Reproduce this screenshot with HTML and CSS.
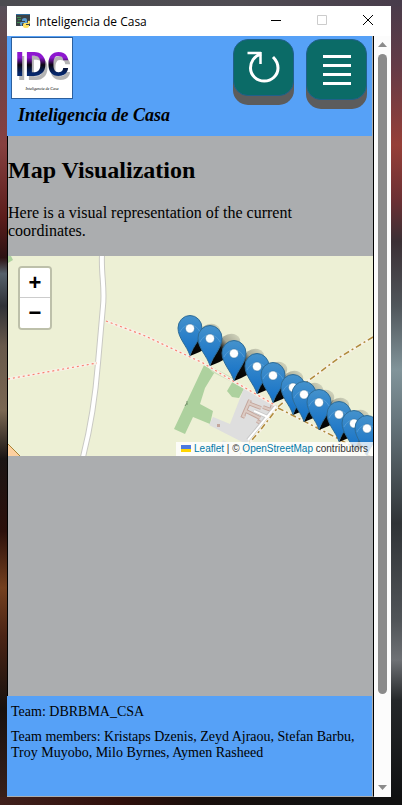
FILE: index.html
```html
<!DOCTYPE html>
<html lang="en">
<head>
    <meta charset="UTF-8">
    <meta name="viewport" content="width=device-width, initial-scale=1.0">
    <title>Inteligencia de Casa</title>
    <link rel="stylesheet" href="styles.css">
</head>
<body>
    <div class="window">
        <div class="titlebar">
            <svg class="app-icon" width="14" height="14" viewBox="0 0 14 14" aria-hidden="true">
                <rect width="14" height="12" fill="#3b4247"/>
                <path d="M0 .5h14" stroke="#2f6f9f"/>
                <path d="M1 3.500h4M2 5.500h3M1 8.500h3" stroke="#3d8b4f"/>
                <path d="M9 4q-3 0-3 2v1h3v1H5q-1 0-1 2 0 2 2 2v-2q0-1 1-1h4V6q0-2-2-2z" fill="#5c9fd4"/>
                <path d="M10 14q3 0 3-2v-1h-3v-1h3q1 0 1-2 0-2-2-1v1q0 1-1 1H8q-1 1-1 2v1q0 2 3 2z" fill="#ffe062"/>
            </svg>
            <span class="title">Inteligencia de Casa</span>
            <button class="win-btn" aria-label="Minimize"><svg width="12" height="12" viewBox="0 0 12 12"><path d="M1 5.500h10" stroke="#000"/></svg></button>
            <button class="win-btn" aria-label="Maximize" disabled><svg width="12" height="12" viewBox="0 0 12 12"><path d="M1.500 .5h9v9h-9z" fill="none" stroke="#ccc"/></svg></button>
            <button class="win-btn" aria-label="Close"><svg width="12" height="12" viewBox="0 0 12 12"><path d="M1 0l10 10M11 0L1 10" stroke="#000"/></svg></button>
        </div>

        <div class="view">
            <div class="page">
                <header>
                    <div class="brand">
                        <div class="logo">
                            <span class="logo-letters">IDC</span>
                            <span class="logo-name">Inteligencia de Casa</span>
                        </div>
                        <span class="brand-name">Inteligencia de Casa</span>
                    </div>
                    <div class="buttons">
                        <button class="btn" aria-label="Refresh">
                            <svg width="36" height="36" viewBox="0 0 36 36" fill="none" stroke="#fff">
                                <path d="M15 4C8 6 4.500 12 4.500 18A13.700 13 0 0 0 32 18C32 13 30 10 27 7" stroke-width="3"/>
                                <path d="M1.500 3H15M14.500 2v12" stroke-width="2.500"/>
                            </svg>
                        </button>
                        <button class="btn btn-menu" aria-label="Menu">
                            <svg width="30" height="32" viewBox="0 0 30 32" stroke="#fff" stroke-width="3">
                                <path d="M1 2.500h28M1 11.500h28M1 20.500h28M1 29.500h28"/>
                            </svg>
                        </button>
                    </div>
                </header>

                <main>
                    <h2>Map Visualization</h2>
                    <p>Here is a visual representation of the current coordinates.</p>

                    <div class="map">
                        <svg class="tiles" viewBox="0 0 365 200" preserveAspectRatio="xMinYMin slice" aria-hidden="true">
                            <defs>
                                <linearGradient id="pin-fill" x1="0" y1="0" x2="0" y2="1">
                                    <stop offset="0" stop-color="#4592cc"/>
                                    <stop offset="1" stop-color="#126fc6"/>
                                </linearGradient>
                                <linearGradient id="shade-fill" x1="0" y1="1" x2="1" y2="0">
                                    <stop offset="0" stop-color="#000"/>
                                    <stop offset=".45" stop-color="#000" stop-opacity=".95"/>
                                    <stop offset=".65" stop-color="#000" stop-opacity=".3"/>
                                    <stop offset="1" stop-color="#000" stop-opacity=".08"/>
                                </linearGradient>
                                <g id="pin">
                                    <path d="M0-.500C-3-10-12-18-12-28A12 12.500 0 0 1 12-28C12-18 3-10 0-.500Z" fill="url(#pin-fill)" stroke="#2e6c97"/>
                                    <path d="M-10-24A11 11.500 0 0 1 10-24" fill="none" stroke="#66a9da" stroke-opacity=".6"/>
                                    <circle cy="-27.500" r="4.500" fill="#fff" stroke="#2e6c97" stroke-opacity=".5"/>
                                </g>
                                <path id="shade" d="M0 0L8-22Q14-34 24-32Q34-28 28-19Q20-7 0 0Z" fill="url(#shade-fill)"/>
                            </defs>

                            <rect width="365" height="200" fill="#edf0d5"/>
                            <path d="M0 0h3l2 4-5 3z" fill="#add19e"/>
                            <path d="M0 188l12 12H0z" fill="#fdd0a0"/>
                            <path d="M0 188l12 12" stroke="#a88232"/>

                            <!-- woods -->
                            <g fill="#add19e">
                                <path d="M197 107l11 7-11 18-5 16 13 7-3 13-17-7-8 17-11-5z"/>
                                <path d="M225 125l12 6-6 11-7-1-5-6z"/>
                                <path d="M197 107l28 15-1 4-20-10z" fill="#cbdfb9"/>
                            </g>
                            <path d="M179 147l-2 3M179 145v4" stroke="#76936c"/>

                            <!-- farmyard -->
                            <path d="M236 132l34 18-32 38-37-19 4-8 17 7z" fill="#dedede"/>
                            <path d="M215 184l14 7-5 9h-17z" fill="#e3e4dc"/>
                            <g fill="none" stroke="#c4a69c" stroke-width="4">
                                <path d="M242 144l-7 16 2 1M240 147l13 5M238 155l14 7M255 151l8 3 2-6M249 165l6 3-3 4"/>
                            </g>
                            <g fill="none" stroke="#dccbc3" stroke-width="2">
                                <path d="M242 144l-7 16 2 1M240 147l13 5M238 155l14 7M255 151l8 3 2-6M249 165l6 3-3 4"/>
                            </g>
                            <rect x="209" y="168" width="3" height="3" fill="#c4a69c"/>
                            <path d="M268 150l-28 34M246 155l16 7" fill="none" stroke="#c8c8c8" stroke-width="4"/>
                            <path d="M268 150l-28 34M246 155l16 7" fill="none" stroke="#fff" stroke-width="2"/>

                            <!-- road and footpaths -->
                            <g fill="none">
                                <path d="M94-1C93 18 97 32 95 50L90 107Q86 158 75 201" stroke="#c9c9c3" stroke-width="6"/>
                                <path d="M94-1C93 18 97 32 95 50L90 107Q86 158 75 201" stroke="#fff" stroke-width="4"/>
                                <path d="M0 123L89 107M98 65L135 79 195 107 225 125 267 149" stroke="#f7f1e6" stroke-width="3"/>
                                <path d="M0 123L89 107M98 65L135 79 195 107 225 125 267 149" stroke="#fa8072" stroke-width="1.200" stroke-dasharray="2 3"/>
                                <path d="M365 81L332 101 300 125 271 150 254 172 229 202M270 152L284 159 329 182 365 202" stroke="#f7f3e6" stroke-width="3"/>
                                <path d="M365 81L332 101 300 125 271 150 254 172 229 202M270 152L284 159 329 182 365 202" stroke="#b08b3c" stroke-width="1.500" stroke-dasharray="6 3 2 3"/>
                            </g>

                            <g>
                                <use href="#shade" x="182" y="100"/>
                                <use href="#shade" x="202" y="110"/>
                                <use href="#shade" x="226" y="125"/>
                                <use href="#shade" x="249" y="138"/>
                                <use href="#shade" x="265" y="147"/>
                                <use href="#shade" x="285" y="159"/>
                                <use href="#shade" x="296" y="166"/>
                                <use href="#shade" x="311" y="174"/>
                                <use href="#shade" x="331" y="186"/>
                                <use href="#shade" x="346" y="195"/>
                            </g>
                            <g>
                                <use href="#pin" x="182" y="100"/>
                                <use href="#pin" x="202" y="110"/>
                                <use href="#pin" x="226" y="125"/>
                                <use href="#pin" x="249" y="138"/>
                                <use href="#pin" x="265" y="147"/>
                                <use href="#pin" x="285" y="159"/>
                                <use href="#pin" x="296" y="166"/>
                                <use href="#pin" x="311" y="174"/>
                                <use href="#pin" x="331" y="186"/>
                                <use href="#pin" x="346" y="195"/>
                                <use href="#pin" x="359" y="200"/>
                            </g>
                        </svg>

                        <div class="zoom">
                            <button aria-label="Zoom in">+</button>
                            <button aria-label="Zoom out">−</button>
                        </div>

                        <div class="attribution">
                            <svg width="10" height="7" viewBox="0 0 10 7" aria-hidden="true"><path fill="#4c7be1" d="M0 0h10v4H0z"/><path fill="#ffd500" d="M0 4h10v3H0z"/></svg>
                            <a href="#">Leaflet</a> | © <a href="#">OpenStreetMap</a> contributors
                        </div>
                    </div>
                </main>

                <footer>
                    <p>Team: DBRBMA_CSA</p>
                    <p>Team members: Kristaps Dzenis, Zeyd Ajraou, Stefan Barbu, Troy Muyobo, Milo Byrnes, Aymen Rasheed</p>
                </footer>
            </div>

            <div class="scrollbar" aria-hidden="true">
                <svg width="9" height="5" viewBox="0 0 9 5"><path d="M0 5L4.500 0 9 5z" fill="#8b8b8b"/></svg>
                <div class="track"><div class="thumb"></div></div>
                <svg width="9" height="5" viewBox="0 0 9 5"><path d="M0 0h9L4.500 5z" fill="#8b8b8b"/></svg>
            </div>
        </div>
    </div>
</body>
</html>
```
FILE: styles.css
```css
* {
    box-sizing: border-box;
}

body {
    margin: 0;
    padding: 6px 11px 8px 7px;
    min-height: 100vh;
    display: flex;
    font-family: "Liberation Serif", serif;
    font-size: 16px;
    color: #000;
    /* blurry desktop wallpaper behind the window */
    background:
        linear-gradient(90deg, #4b4b50, #4f4c52 60%, #483c4b) top / 100% 6px no-repeat,
        linear-gradient(90deg, #40201c, #30100c 30%, #190f0c 50%, #111 80%) bottom / 100% 8px no-repeat,
        linear-gradient(#54505a, #6e4347 8%, #86403f 18%, #5b1d1b 27%, #2c1112 32%, #55616a 34%, #303236 38%, #68594b 43%, #7a6752 51%, #1b1514 57%, #2c100b 66%, #74401f 73%, #4b2415 79%, #17110e 88%, #3b211b) left / 50% 100% no-repeat,
        linear-gradient(#483c4b, #633b47 8%, #963f38 18%, #6b3034 25%, #3b3035 30%, #50565b 38%, #81949a 46%, #68777e 52%, #303437 65%, #505458 77%, #6e7175 82%, #25282a 87%, #0e0f10) right / 50% 100% no-repeat;
}

button {
    font: inherit;
    padding: 0;
    border: 0;
    cursor: pointer;
}

.window {
    flex: 1;
    min-width: 0;
    display: flex;
    flex-direction: column;
    background: #fff;
}

/* Title bar */
.titlebar {
    height: 30px;
    display: flex;
    align-items: center;
    padding-left: 9px;
}

.title {
    flex: 1;
    padding-left: 6px;
    font: 12px "Open Sans", sans-serif;
    white-space: nowrap;
}

.win-btn {
    width: 46px;
    height: 28px;
    display: flex;
    align-items: center;
    justify-content: center;
    background: none;
}

.view {
    flex: 1;
    display: flex;
}

.page {
    flex: 1;
    min-width: 0;
    display: flex;
    flex-direction: column;
    background: #abadaf;
    border-right: 1px solid #000;
    border-bottom: 1px solid #abadaf;
}

/* Header */
header {
    min-height: 100px;
    margin-right: 1px;
    padding: 1px 5px 0 4px;
    display: flex;
    justify-content: space-between;
    background: #56a1f7;
}

.logo {
    width: 62px;
    height: 62px;
    display: flex;
    flex-direction: column;
    align-items: center;
    justify-content: center;
    background: #fff;
    border: 1px solid #2b5f9e;
}

.logo-letters {
    font: bold 34px/42px Roboto, "Liberation Sans", sans-serif;
    color: transparent;
    background: linear-gradient(#8d17cf 35%, #0a0412 52%, #06276b 72%);
    -webkit-background-clip: text;
    background-clip: text;
    filter: drop-shadow(2px 4px 0 #b4b4b4);
}

.logo-name {
    font: italic 4px/8px "Liberation Serif", serif;
}

.brand-name {
    display: block;
    padding-left: 7px;
    font: italic bold 18px/32px "Liberation Serif", serif;
    white-space: nowrap;
}

.buttons {
    display: flex;
    align-items: flex-start;
    gap: 12px;
    padding-top: 2px;
}

.btn {
    width: 61px;
    height: 57px;
    display: flex;
    align-items: center;
    justify-content: center;
    background: #0b6b67;
    border: 1px solid #20608a;
    border-radius: 15px;
    box-shadow: 0 9px #5c5c5c;
}

.btn-menu {
    height: 61px;
}

/* Content */
main {
    flex: 1;
    border-left: 1px solid #000;
}

h2 {
    margin: 20px 0;
    font-size: 24px;
    line-height: 28px;
}

main p {
    margin: 0 0 16px;
    padding-right: 40px;
    line-height: 18px;
}

.map {
    position: relative;
    height: 200px;
    overflow: hidden;
    background: #edf0d5;
}

.tiles {
    display: block;
    width: 100%;
    height: 100%;
}

.zoom {
    position: absolute;
    top: 10px;
    left: 10px;
    border: 2px solid rgba(0, 0, 0, 0.2);
    border-radius: 4px;
    background-clip: padding-box;
}

.zoom button {
    display: block;
    width: 30px;
    height: 30px;
    background: #fff;
    font: bold 22px/30px "Liberation Sans", sans-serif;
}

.zoom button:first-child {
    border-bottom: 1px solid #ccc;
    border-radius: 2px 2px 0 0;
}

.zoom button:last-child {
    border-radius: 0 0 2px 2px;
}

.attribution {
    position: absolute;
    right: 0;
    bottom: 0;
    padding: 0 5px;
    background: rgba(255, 255, 255, 0.8);
    font: 10px/14px "Liberation Sans", sans-serif;
    color: #333;
    white-space: nowrap;
}

.attribution a {
    color: #0078a8;
    text-decoration: none;
}

/* Footer */
footer {
    min-height: 100px;
    margin-right: 1px;
    padding: 8px 4px;
    background: #56a1f7;
    font-size: 14px;
    line-height: 16px;
}

footer p {
    margin: 0 0 9px;
}

/* Scrollbar */
.scrollbar {
    width: 17px;
    padding: 6px 0 7px;
    display: flex;
    flex-direction: column;
    align-items: center;
    gap: 7px;
    background: #fcfcfc;
}

.track {
    flex: 1;
}

.thumb {
    width: 9px;
    height: calc(100% - 84px);
    border-radius: 5px;
    background: #8b8b8b;
}
```
